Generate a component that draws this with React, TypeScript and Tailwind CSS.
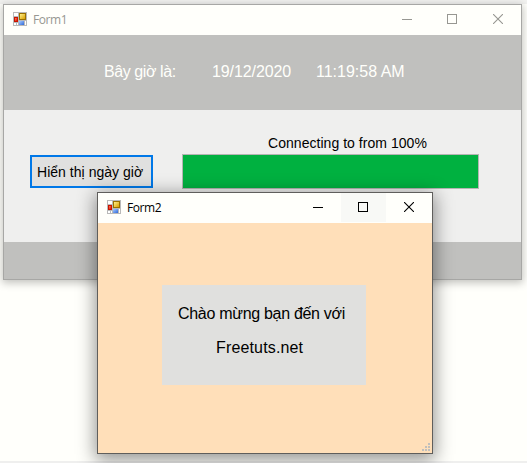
import { useId, type ReactNode } from "react";

function FormIcon() {
  const id = useId();
  return (
    <svg width="14" height="14" viewBox="0 0 14 14" shapeRendering="crispEdges">
      <defs>
        <linearGradient id={"y" + id} x1="0" y1="0" x2="1" y2="1">
          <stop offset="0" stopColor="#fff08a" />
          <stop offset="1" stopColor="#d9a000" />
        </linearGradient>
        <linearGradient id={"r" + id} x1="0" y1="0" x2="1" y2="1">
          <stop offset="0" stopColor="#ff7a5c" />
          <stop offset="1" stopColor="#e01400" />
        </linearGradient>
        <linearGradient id={"u" + id} x1="0" y1="0" x2="1" y2="1">
          <stop offset="0" stopColor="#a9ccff" />
          <stop offset="1" stopColor="#2f68d8" />
        </linearGradient>
      </defs>
      <rect width="14" height="14" fill="#b9b9b9" />
      <path d="M1 1h4v3H1zM1 11h2v2H1zM4 11h1v2H4zM12 9h1v4h-1z" fill="#fff" />
      <rect x="6" y="1" width="7" height="7" fill="#9a7000" />
      <rect x="7" y="2" width="5" height="5" fill={`url(#y${id})`} />
      <rect x="1" y="5" width="4" height="5" fill="#c81400" />
      <rect x="2" y="6" width="2" height="3" fill={`url(#r${id})`} />
      <rect x="6" y="9" width="5" height="4" fill={`url(#u${id})`} />
    </svg>
  );
}

function TitleBar({ title, active }: { title: string; active: boolean }) {
  return (
    <div className={`flex h-[30px] shrink-0 bg-[#fffffb] ${active ? "text-black" : "text-[#979792]"}`}>
      <div className="ml-[9px] mt-[7px] h-[14px] w-[14px]">
        <FormIcon />
      </div>
      <span className="ml-[6px] mt-[6px] font-['Open_Sans','Noto_Sans',sans-serif] text-[12px] leading-[17px] tracking-[-0.45px]">
        {title}
      </span>
      <div className="ml-auto flex">
        <div className="w-[45px] pl-[17px] pt-[14px]">
          <div className="h-px w-[10px] bg-current" />
        </div>
        <div className={`h-[29px] w-[45px] pl-[17px] pt-[9px] ${active ? "bg-[#f8f9f6]" : ""}`}>
          <div className="h-[10px] w-[10px] border border-current" />
        </div>
        <div className="w-[46px] pl-[18px] pt-[9px]">
          <svg width="10" height="10" viewBox="0 0 10 10" stroke="currentColor" strokeWidth="1.1">
            <path d="M0 0l10 10M10 0L0 10" />
          </svg>
        </div>
      </div>
    </div>
  );
}

function Label({ className, children }: { className: string; children: ReactNode }) {
  return <span className={`whitespace-nowrap ${className}`}>{children}</span>;
}

function MainForm() {
  return (
    <section className="absolute left-[3px] top-[4px] flex h-[276px] w-[519px] flex-col border border-[#a7a7a5] bg-[#efefee] shadow-[0_2px_8px_1px_rgba(0,0,0,0.24)]">
      <TitleBar title="Form1" active={false} />
      <header className="flex h-[75px] shrink-0 bg-[#c0c0be] pt-[28px] text-[16px] leading-[18px] text-[#fffffb]">
        <Label className="ml-[100px] w-[108px] tracking-[-0.42px]">Bây giờ là:</Label>
        <Label className="w-[104px] tracking-[-0.1px]">19/12/2020</Label>
        <Label className="">11:19:58 AM</Label>
      </header>
      <main className="flex h-[132px] shrink-0 pl-[26px] text-[14px] text-black">
        <button className="mt-[45px] flex h-[33px] w-[123px] whitespace-nowrap border-2 border-[#0078e8] bg-[#e0e0df] pl-[5px] pt-[7px] text-left leading-[16px] tracking-[0.03px]">
          Hiển thị ngày giờ
        </button>
        <div className="ml-[29px] flex w-[297px] flex-col">
          <Label className="ml-[86px] mt-[25px] leading-[16px] tracking-[0.04px]">Connecting to from 100%</Label>
          <div className="mt-[3px] h-[35px] border border-[#b5b5b3] bg-[#00b140]" />
        </div>
      </main>
      <footer className="flex-1 bg-[#c0c0be]" />
    </section>
  );
}

function WelcomeForm() {
  return (
    <section className="absolute left-[97px] top-[192px] flex h-[262px] w-[336px] flex-col border border-[#5f5e5c] bg-[#ffdfb9] shadow-[0_4px_17px_2px_rgba(0,0,0,0.42)]">
      <TitleBar title="Form2" active />
      <div className="ml-[64px] mt-[62px] flex h-[100px] w-[204px] flex-col bg-[#e0e0de] pt-[20px] text-[16px] leading-[18px] text-black">
        <Label className="ml-[16px] tracking-[-0.3px]">Chào mừng bạn đến với</Label>
        <Label className="ml-[54px] mt-[16px] tracking-[0.15px]">Freetuts.net</Label>
      </div>
      <svg className="ml-auto mr-[2px] mt-auto mb-[2px]" width="8" height="8" viewBox="0 0 8 8" fill="#bfbfbd" shapeRendering="crispEdges">
        <path d="M6 0h2v2H6zM3 3h2v2H3zM6 3h2v2H6zM0 6h2v2H0zM3 6h2v2H3zM6 6h2v2H6z" />
      </svg>
    </section>
  );
}

export default function App() {
  return (
    <div className="relative flex h-[463px] w-[527px] flex-col justify-between overflow-hidden bg-[#fffffb] font-['Liberation_Sans',Arial,sans-serif]">
      <div className="h-[4px] bg-[#f2f2f0]" />
      <div className="h-[2px] bg-[#efefee]" />
      <MainForm />
      <WelcomeForm />
    </div>
  );
}
